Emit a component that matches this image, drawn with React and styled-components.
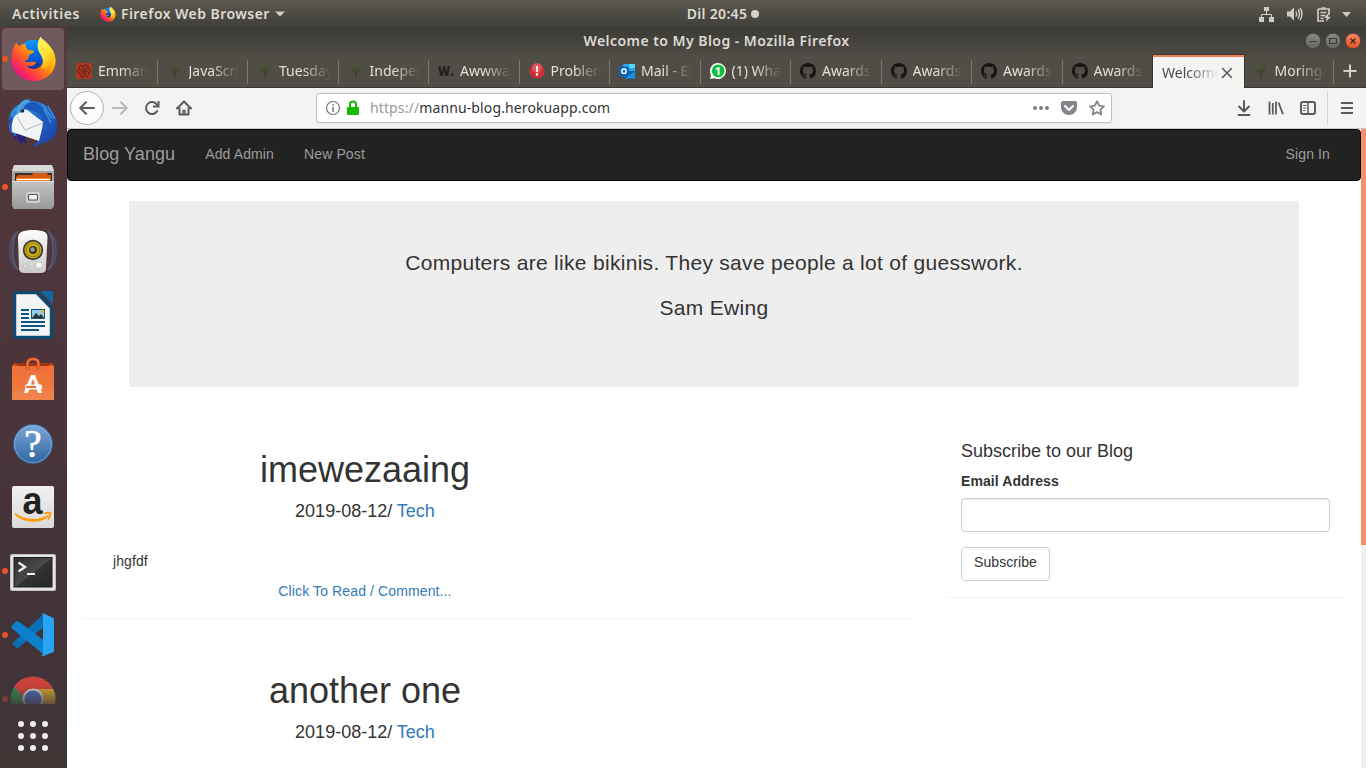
import React from "react";
import styled, { createGlobalStyle } from "styled-components";

const Global = createGlobalStyle`
  * { box-sizing: border-box; }
  html, body { margin: 0; padding: 0; height: 768px; overflow: hidden; }
  body { font-family: "Liberation Sans", Arial, sans-serif; font-size: 14px; line-height: 20px; color: #333; }
  a { text-decoration: none; color: #337ab7; }
  h1, h3, h4, p { margin: 0; font-weight: 400; }
  svg { display: block; flex: none; }
`;

const ui = `font-family: "Noto Sans", "Open Sans", sans-serif;`;

const Desktop = styled.div`
  width: 1366px; height: 768px; display: flex; flex-direction: column; overflow: hidden;
`;
const TopBar = styled.header`
  height: 27px; flex: none; display: grid; grid-template-columns: 1fr auto 1fr; align-items: center;
  padding: 0 14px 0 12px;
  background: linear-gradient(#5b584f, #403f3a);
  color: #dfdbd2; ${ui} font-size: 14px; font-weight: 600;
`;
const BarGroup = styled.div`
  display: flex; align-items: center; height: 27px;
  justify-content: ${(p) => (p.$end ? "flex-end" : "flex-start")};
`;
const BarText = styled.span`
  white-space: nowrap; line-height: 26px; letter-spacing: ${(p) => p.$ls || 0}px;
  margin-left: ${(p) => p.$ml || 0}px; margin-right: ${(p) => p.$mr || 0}px;
`;
const Clock = styled.div`display: flex; align-items: center; transform: translateX(41px); gap: 4px;`;
const Dot = styled.i`width: 8px; height: 8px; border-radius: 50%; background: #d4d1ca;`;

const Body = styled.div`display: flex; flex: 1; min-height: 0;`;
const Dock = styled.nav`
  width: 67px; flex: none; display: flex; flex-direction: column;
  background: linear-gradient(#54383c, #4b353b 45%, #43333a 80%, #3f3535);
`;
const DockList = styled.div`height: 677px; overflow: hidden; flex: none;`;
const DockItem = styled.div`
  height: 64px; width: 66px; position: relative;
  opacity: ${(p) => (p.$dim ? 0.85 : 1)};
  &::before {
    content: ""; position: absolute; display: ${(p) => (p.$active ? "block" : "none")};
    left: 2px; top: 1px; width: 62px; height: 62px; border-radius: 4px; background: #705a5e;
  }
  &::after {
    content: ""; position: absolute; display: ${(p) => (p.$running ? "block" : "none")};
    left: 2px; top: 29px; width: 6px; height: 6px; border-radius: 50%; background: #e95420;
    opacity: ${(p) => (p.$dim ? 0.4 : 1)};
  }
  svg { position: relative; }
`;
const AppsButton = styled.div`height: 64px; width: 66px;`;

const Window = styled.main`flex: 1; min-width: 0; display: flex; flex-direction: column; background: #fff;`;
const TitleBar = styled.div`
  height: 28px; flex: none; display: grid; grid-template-columns: 1fr auto 1fr; align-items: center;
  padding-right: 5px; background: linear-gradient(#3b3a36, #4d4b44);
  color: #dfdbd2; ${ui} font-size: 14px; font-weight: 600;
`;
const WinButtons = styled.div`grid-column: 3; display: flex; justify-content: flex-end; gap: 4px;`;
const WinTitle = styled.div`grid-column: 2; letter-spacing: ${(p) => p.$ls}px; line-height: 26px; padding-left: 5px;`;

const TabStrip = styled.div`
  height: 33px; flex: none; display: flex; background: #504d46; border-bottom: 1px solid #3a3934;
`;
const Tabs = styled.div`width: 1267px; display: flex;`;
const Tab = styled.div`
  flex: 1 1 0; min-width: 0; display: flex; align-items: center; position: relative;
  padding: 0 9px 0 9px; height: 32px; color: #e2dfd8; ${ui} font-size: 14px;
  &::after {
    content: ""; position: absolute; right: 0; top: 5px; width: 1px; height: 24px;
    background: ${(p) => (p.$sep ? "#7b7870" : "transparent")};
  }
`;
const ActiveTab = styled(Tab)`
  height: 33px; background: #f5f4f2; color: #4c4c4c; padding: 0 9px 0 9px;
  border-top: 2px solid #f0805a; box-shadow: -1px 0 #37352f, 1px 0 #37352f, 0 -1px #37352f;
`;
const TabTitle = styled.span`
  margin-left: ${(p) => (p.$first ? 0 : 6)}px; flex: 1; min-width: 0; overflow: hidden; white-space: nowrap;
  line-height: 32px; height: 32px;
  mask-image: linear-gradient(to right, #000 45%, transparent 100%);
`;
const NewTab = styled.div`width: 32px; height: 32px; display: flex; align-items: center; justify-content: center;`;

const Toolbar = styled.div`
  height: 41px; flex: none; display: flex; align-items: center; background: #f4f3f1;
  border-bottom: 1px solid #c9c7c4; padding: 0 3px;
`;
const NavButton = styled.div`
  width: 32px; height: 40px; display: flex; align-items: center; justify-content: center;
`;
const BackButton = styled.div`
  width: 34px; height: 34px; border: 1px solid #b5b3b0; border-radius: 50%; background: #fcfcfb;
  display: flex; align-items: center; justify-content: center;
`;
const UrlBar = styled.div`
  width: 796px; height: 30px; margin-left: 116px; border: 1px solid #c4c2bf; border-radius: 3px;
  background: #fff; display: flex; align-items: center; box-shadow: 0 1px 2px rgba(0,0,0,.06);
  padding: 0 5px 0 8px;
`;
const Identity = styled.div`display: flex; gap: 6px;`;
const Url = styled.span`
  flex: 1; margin-left: 11px; color: #333; ${ui} font-size: 14px; letter-spacing: ${(p) => p.$ls}px;
  line-height: 28px;
  span { color: #999; }
`;
const UrlActions = styled.div`display: flex; gap: 10px;`;
const Tools = styled.div`display: flex; margin-left: auto; align-items: center;`;
const ToolSep = styled.i`width: 1px; height: 34px; background: #d6d4d1; margin: 0 3px 0 3px;`;

const Viewport = styled.div`flex: 1; min-height: 0; display: flex; overflow: hidden;`;
const Page = styled.div`flex: 1; min-width: 0; overflow: hidden; background: #fff;`;
const Scrollbar = styled.div`
  width: 5px; background: #f0f0f0;
  &::before { content: ""; display: block; height: 416px; background: #f4906a; }
`;
const Navbar = styled.div`
  height: 52px; border: 1px solid #080808; border-radius: 4px; background: #222; color: #9d9d9d;
  display: flex; padding: 0 30px 0 15px; line-height: 20px; align-items: flex-start;
`;
const Brand = styled.a`font-size: 18px; color: #9d9d9d; padding: 14px 0; letter-spacing: .08px;`;
const NavLink = styled.a`
  color: #9d9d9d; padding: 14px 0; letter-spacing: .12px;
  margin-left: ${(p) => (p.$right ? "auto" : "30px")};
`;
const Jumbotron = styled.section`
  width: 1170px; margin: 20px auto 30px; padding: 47px 60px; height: 186px; background: #eee;
  display: flex; flex-direction: column; gap: 15px; text-align: center;
  p { font-size: 21px; line-height: 30px; letter-spacing: .3px; }
`;
const Columns = styled.div`display: flex; gap: 30px; padding: 0 15px; align-items: flex-start;`;
const Posts = styled.div`width: 833px; display: flex; flex-direction: column; gap: 20px;`;
const Panel = styled.article`
  border: 1px solid transparent; border-radius: 4px; background: #fff;
  box-shadow: 0 1px 2px rgba(0,0,0,.06);
`;
const Post = styled(Panel)`height: 201px; padding: 32px 30px 0;`;
const PostHead = styled.div`width: 504px; text-align: center; padding-bottom: 30px;`;
const PostTitle = styled.h1`font-size: 36px; line-height: 40px;`;
const PostMeta = styled.h3`font-size: 18px; line-height: 20px; margin-top: 11px;`;
const PostText = styled.p`margin-bottom: 10px; letter-spacing: .1px;`;
const ReadMore = styled.div`width: 504px; text-align: center; letter-spacing: .12px;`;
const Aside = styled(Panel)`width: 401px; height: 180px; padding: 23px 15px 0; display: flex; flex-direction: column;`;
const AsideTitle = styled.h4`font-size: 18px; line-height: 20px; margin-bottom: 10px;`;
const Label = styled.label`font-weight: 700; margin-bottom: 7px; letter-spacing: .08px;`;
const Input = styled.input`
  height: 34px; width: 369px; border: 1px solid #ccc; border-radius: 4px; background: #fff;
  box-shadow: inset 0 1px 1px rgba(0,0,0,.075); margin: 0 0 15px; padding: 6px 12px; outline: none;
`;
const Button = styled.button`
  height: 34px; width: 89px; border: 1px solid #ccc; border-radius: 4px; background: #fff; color: #333;
  font: 14px/20px "Liberation Sans", Arial, sans-serif; padding: 0 0 4px; letter-spacing: .08px;
`;

/* ---------- icons ---------- */
const Firefox = ({ size = 48, id = "f", ...rest }) => (
  <svg width={size} height={size} viewBox="0 0 48 48" {...rest}>
    <defs>
      <linearGradient id={id + "a"} x1="0.85" y1="0.1" x2="0.15" y2="0.85">
        <stop offset="0" stopColor="#fff44f" /><stop offset=".35" stopColor="#ffb000" />
        <stop offset=".6" stopColor="#ff6a20" /><stop offset=".85" stopColor="#ff2b55" /><stop offset="1" stopColor="#e31587" />
      </linearGradient>
      <linearGradient id={id + "b"} x1=".5" y1="0" x2=".6" y2="1">
        <stop offset="0" stopColor="#0a9bff" /><stop offset=".5" stopColor="#0060df" /><stop offset="1" stopColor="#2a1b7a" />
      </linearGradient>
      <linearGradient id={id + "c"} x1=".3" y1="0" x2=".8" y2="1">
        <stop offset="0" stopColor="#fff36a" /><stop offset=".55" stopColor="#ffe030" /><stop offset="1" stopColor="#ff9a00" />
      </linearGradient>
    </defs>
    <circle cx="24" cy="22" r="17" fill={`url(#${id}b)`} />
    <path fill={`url(#${id}a)`} d="M6.500 7.500C7 9.500 8 11 9.500 11.500c2-1.700 4-2.500 6.500-2.500-.5 2.500.5 5 3 6.300l5.500.7c-.2 2-1.500 2.800-4.500 4-1 1-.5 3-1.500 4.500-1.500 1-2.500 1-3.300 2.300 3 2.200 7.800-.8 11.300 1.200-1.500 4-6.500 4-9.500 3.500 3.500 4.500 11 4.500 15-.5 4.500-6 2.500-13.500-2.500-18L31 2.500C35 5 46.500 14 46.500 26 46.500 38.500 36.500 47 24.500 47 11.500 47 1.500 37.500 1.500 25 1.500 17.500 3.500 12 6.500 7.500z" />
    <path fill={`url(#${id}c)`} d="M31.500 1.500C26.500 8 28 15 31.500 20.500c3 4.500 2.500 9.500.5 14C41 35 46 27 45.500 20.500 44.500 12 33.500 10 31.500 1.500z" />
  </svg>
);

const DockSvg = ({ children }) => <svg width="66" height="64" viewBox="0 0 66 64">{children}</svg>;

const FirefoxDock = () => (
  <DockSvg><Firefox x="10" y="8" size={47} id="fd" /></DockSvg>
);
const Thunderbird = () => (
  <DockSvg>
    <defs>
      <linearGradient id="tb" x1="0" y1="0" x2="1" y2="1"><stop offset="0" stopColor="#3fa0e0" /><stop offset=".5" stopColor="#1f68cc" /><stop offset="1" stopColor="#1b3a9c" /></linearGradient>
    </defs>
    <path fill="#2a2273" d="M12 40l3 8 2-1 4 7 2-4 4 3-3-10z" />
    <path fill="url(#tb)" d="M20 13c2-4 5-5 11-5l-3 2c17-1 29 10 29 25 0 7-2 11-5 14l0-3c-2 4-6 6-9 7l1-3c-3 3-6 5-12 6 5-4 9-9 9-14L18 26l-3 14 2 6c-2-1-4-2-5-5l-1 2c-2-5-3-9-1-14l-1 1c0-7 4-14 11-17z" />
    <path fill="#1b50b0" d="M9 30l2-6 3 10-1 6-2 3z" />
    <path fill="#f2f3f4" d="M18 22l8-4 17 13-1 7-3 12-27-9c-1-5 0-12 3-16z" />
    <path d="M17 26l8 13 18-7" fill="none" stroke="#b8b8b8" />
    <path fill="#1c58b8" d="M19 20c2-8 8-11 15-9 7 2 8 8 12 12 3 3 3 6 1 10-3-6-9-13-17-14l-6-1-4 4z" />
    <path fill="#58aee6" d="M20 13c-3 4-4 8-3 12 2-4 4-5 6-6 1-5 4-7 8-8-3-3-8-2-11 2z" opacity=".75" />
    <circle cx="22.500" cy="20" r="1.800" fill="#142a55" />
    <path d="M42 13l10 14M48 15l7 13M44 18l7 14" stroke="#3d91dc" strokeWidth="1.300" />
  </DockSvg>
);
const Files = () => (
  <DockSvg>
    <defs><linearGradient id="fg" x1="0" y1="0" x2="0" y2="1"><stop offset="0" stopColor="#c4c4c4" /><stop offset="1" stopColor="#9a9a9a" /></linearGradient></defs>
    <path fill="#a4a4a4" d="M12 16l2-5h38l2 5v27H12z" />
    <path fill="#d8d8d8" d="M14 10h38l2 6H12z" />
    <rect x="15" y="18" width="37" height="10" fill="#34302e" />
    <path d="M16 22l2-2h14l1-2h14l1 2h3v8H16z" fill="#d45712" /><path d="M16 23h34v5H16z" fill="#f28a35" /><path d="M17 24.500h33" stroke="#fff" strokeWidth="1" />
    <path d="M12 26h42v25l-2 3H14l-2-3z" fill="url(#fg)" /><path d="M12 26.500h42" stroke="#dedede" />
    <rect x="26" y="37" width="14" height="11" rx="2" fill="#d0d0d0" /><rect x="28.500" y="39.500" width="9" height="5.500" rx="1" fill="#f5f5f5" stroke="#555" strokeWidth="1.200" />
  </DockSvg>
);
const Rhythmbox = () => (
  <DockSvg>
    <defs><linearGradient id="rg" x1="0" y1="0" x2="0" y2="1"><stop offset="0" stopColor="#fdfdfd" /><stop offset="1" stopColor="#c9c9c7" /></linearGradient></defs>
    <g fill="none" stroke="#5a78a8" strokeWidth="1.500">
      <path opacity=".6" d="M18 12c-7 8-7 30 0 39M48 12c7 8 7 30 0 39" />
      <path opacity=".4" d="M15 14c-6 9-6 26 0 35M51 14c6 9 6 26 0 35" />
      <path opacity=".22" d="M12 18c-4 8-4 19 0 27M54 18c4 8 4 19 0 27" />
    </g>
    <path fill="url(#rg)" d="M24 12c5-1.500 13-1.500 18 0 4 1 5.500 3 5.500 7L46 49c0 4-2 5-6 5H26c-5 0-7-1-7-5l-1-30c0-4 2-6 6-7z" />
    <circle cx="33" cy="31" r="10.200" fill="#3b3a38" /><circle cx="33" cy="31" r="8.500" fill="#cbae12" />
    <circle cx="33" cy="31" r="6.800" fill="none" stroke="#917c08" /><circle cx="33" cy="31" r="4" fill="#3a382e" /><circle cx="32.500" cy="30.500" r="2.300" fill="#9a9a94" />
    <circle cx="39" cy="46" r="3.300" fill="#f8f8f8" stroke="#c8c8c6" /><circle cx="25.500" cy="47" r="2.200" fill="#dededc" stroke="#c5c5c3" />
  </DockSvg>
);
const Writer = () => (
  <DockSvg>
    <path fill="#0c4a73" d="M15.500 8H37l16 16.500V53c0 2-1 3-3 3H16c-2 0-3-1-3-3V10.500C13 9 14 8 15.500 8z" />
    <path fill="#0e68a3" d="M40 8h11c1.500 0 2 1 2 2v11.500z" />
    <path fill="#f3f4f5" stroke="#c6c8ca" d="M16.500 11.500H36L49.500 25.500v27h-33z" />
    <g fill="#0d5480"><path d="M21 26h8v2h-8zM21 30h8v2h-8zM21 34h8v2h-8zM21 38h24v2H21zM21 42h24v2H21zM21 46h18v2H21z" /></g>
    <rect x="31.500" y="26.500" width="13" height="9" fill="#8ccdf0" stroke="#0d5480" /><path d="M32 35l4-5 3 3 2-2 3 4z" fill="#333" /><circle cx="42.500" cy="28.500" r="1.800" fill="#e2b92e" />
  </DockSvg>
);
const Software = () => (
  <DockSvg>
    <defs><linearGradient id="sg" x1="0" y1="0" x2="0" y2="1"><stop offset="0" stopColor="#f07038" /><stop offset="1" stopColor="#ef7d43" /></linearGradient></defs>
    <path fill="#9e3310" d="M14 16h38l2 4H12z" />
    <path fill="#d5501e" d="M14 16l6 4h-8zM52 16l-6 4h8z" />
    <rect x="12" y="19" width="42" height="34" fill="url(#sg)" /><path d="M12 44h42v9H12z" fill="#fff" opacity=".06" />
    <path d="M27.500 23v-6c0-4 2-5 5.500-5s5.500 1 5.500 5v6" fill="none" stroke="#b7421a" strokeWidth="3.500" />
    <path d="M27.500 23v-6c0-4 2-5 5.500-5s5.500 1 5.500 5v6" fill="none" stroke="#f0743e" strokeWidth="2" />
    <text x="33" y="46" textAnchor="middle" fontFamily="Lato, sans-serif" fontWeight="900" fontSize="25" fill="#fff">A</text>
    <rect x="25" y="37.500" width="17" height="5" rx="1.500" fill="#fff" /><rect x="26" y="39" width="10" height="2" fill="#f07038" />
  </DockSvg>
);
const Help = () => (
  <DockSvg>
    <defs><linearGradient id="hg" x1="0" y1="0" x2="0" y2="1"><stop offset="0" stopColor="#7da8d8" /><stop offset="1" stopColor="#2f649f" /></linearGradient></defs>
    <circle cx="33" cy="33" r="19.500" fill="url(#hg)" stroke="#2e5f96" />
    <circle cx="33" cy="33" r="18.500" fill="none" stroke="#8fb5de" strokeWidth=".8" opacity=".8" />
    <text x="33" y="46" textAnchor="middle" fontFamily="Liberation Serif, serif" fontSize="39" fill="#fff" stroke="#fff" strokeWidth=".7">?</text>
  </DockSvg>
);
const Amazon = () => (
  <DockSvg>
    <defs><linearGradient id="ag" x1="0" y1="0" x2="0" y2="1"><stop offset="0" stopColor="#f1f1f1" /><stop offset="1" stopColor="#dadada" /></linearGradient></defs>
    <rect x="12" y="11" width="42" height="42" rx="2" fill="url(#ag)" />
    <text x="32.500" y="38.500" textAnchor="middle" fontFamily="Liberation Sans, sans-serif" fontWeight="700" fontSize="39" textLength="20" lengthAdjust="spacingAndGlyphs" fill="#222">a</text>
    <path fill="#ff9900" d="M15 38c10 7 23 8 33 2l1 1.500C39 49.500 24 48 15 40z" />
    <path fill="none" stroke="#ff9900" strokeWidth="1.700" d="M44 38.500c3-1.200 5-1.200 6.500-.5 0 2.500-.8 4.500-2.500 6.500" />
  </DockSvg>
);
const TerminalIcon = () => (
  <DockSvg>
    <defs><linearGradient id="tg" x1="0" y1="0" x2="1" y2="1"><stop offset="0" stopColor="#2d2d2d" /><stop offset=".5" stopColor="#4a4a4a" /><stop offset=".52" stopColor="#333" /><stop offset="1" stopColor="#262626" /></linearGradient></defs>
    <rect x="10" y="15" width="46" height="37" rx="2" fill="#c0c0c0" /><rect x="11" y="16" width="44" height="35" rx="1" fill="#e4e4e4" />
    <rect x="14" y="18.500" width="38" height="29.500" fill="url(#tg)" stroke="#1b1b1b" />
    <path d="M18.500 23.500l6.500 4.500-6.500 4.500" fill="none" stroke="#eee" strokeWidth="2.400" /><path d="M27 34h8v2h-8z" fill="#f3f3f3" />
  </DockSvg>
);
const Code = () => (
  <DockSvg>
    <path fill="#0a6fb5" d="M12 40.500l4 4c1 .7 2 .7 2.800 0L43 24.500V11.500z" />
    <path fill="#0c80cc" d="M12 22.500l4-4c1-.7 2-.7 2.800 0L43 37v14L12 25.500c-1-1-1-2 0-3z" />
    <path fill="#27a5f2" d="M43.500 10.500l9.500 4.200c.7.400 1 .9 1 1.600v31.200c0 .8-.3 1.400-1 1.700L43.500 53c-1 .4-2-.3-2.500-1 1.200.7 2-.3 2-1V12.500c0-.8-.8-1.500-2-1 .6-.8 1.500-1.300 2.500-1z" />
  </DockSvg>
);
const Chrome = () => (
  <DockSvg>
    <defs>
      <linearGradient id="cf" x1="0" y1="9" x2="0" y2="37" gradientUnits="userSpaceOnUse"><stop offset=".35" stopColor="#43343a" stopOpacity="0" /><stop offset="1" stopColor="#43343a" stopOpacity=".75" /></linearGradient>
      <clipPath id="cc"><circle cx="33" cy="32" r="22.500" /></clipPath>
    </defs>
    <g clipPath="url(#cc)">
      <rect x="10" y="9" width="46" height="46" fill="#2c9a52" />
      <path d="M33 22h24v33H33z" fill="#e9b631" />
      <path d="M14 20L22 6h36v16H33c-5 0-9 4-10 8z" fill="#e2453c" />
    </g>
    <circle cx="33" cy="32" r="10.500" fill="#eee" /><circle cx="33" cy="32" r="8.500" fill="#4576c8" />
    <rect x="9" y="8" width="48" height="30" fill="url(#cf)" />
  </DockSvg>
);
const AppsGrid = () => (
  <svg width="66" height="64" viewBox="0 0 66 64" fill="#eeeeec">
    {[20, 32, 44].map((y) => [21, 33, 45].map((x) => <circle key={x + "-" + y} cx={x} cy={y} r="3" />))}
  </svg>
);

const Fav = ({ kind }) => {
  if (kind === "wars")
    return (
      <svg width="16" height="16" viewBox="0 0 16 16"><rect width="16" height="16" fill="#b1361e" />
        <g fill="none" stroke="#5a2a20" strokeWidth="1.100">
          {[0, 60, 120, 180, 240, 300].map((a) => <path key={a} transform={`rotate(${a} 8 8)`} d="M8 7.500C6 6 6 3.500 8.500 2.300c1.500-.4 3 0 4 1" />)}
        </g></svg>
    );
  if (kind === "tree")
    return (
      <svg width="16" height="16" viewBox="0 0 16 16">
        <path d="M8 15.500V9M7.700 10L4 6.500M8.300 10L12 5.500M8 9V4" stroke="#3f4426" strokeWidth="1.500" fill="none" />
        <g fill="#48502f"><circle cx="3" cy="5" r="1.300" /><circle cx="6" cy="3.500" r="1.300" /><circle cx="9.500" cy="2.500" r="1.200" /><circle cx="12.500" cy="4" r="1.300" /><circle cx="4" cy="8" r="1" /><circle cx="12.500" cy="7.500" r="1" /><circle cx="8" cy="5.500" r="1.200" /></g>
      </svg>
    );
  if (kind === "w")
    return (
      <svg width="16" height="16" viewBox="0 0 16 16"><text x="0" y="13" textLength="15.500" lengthAdjust="spacingAndGlyphs" fontFamily="Open Sans, sans-serif" fontWeight="800" fontSize="14" fill="#222">W.</text></svg>
    );
  if (kind === "alert")
    return (
      <svg width="16" height="16" viewBox="0 0 16 16"><circle cx="8" cy="8" r="7.600" fill="#cf2d35" /><circle cx="8" cy="5" r="5" fill="#ea8589" opacity=".45" /><path d="M7 3h2l-.3 6H7.300z" fill="#fff" /><circle cx="8" cy="11.500" r="1.200" fill="#fff" /></svg>
    );
  if (kind === "outlook")
    return (
      <svg width="16" height="16" viewBox="0 0 16 16"><path fill="#28a8ea" d="M4 1h12v8H4z" /><path fill="#50d9ff" d="M10 1h6v4h-6z" /><path fill="#0a5ea8" d="M4 8h12v7.500H4z" /><path fill="#1490df" d="M16 8v7.500H6z" />
        <rect y="3.500" width="10" height="9.500" rx=".8" fill="#0f64bd" /><circle cx="5" cy="8.200" r="2.200" fill="none" stroke="#fff" strokeWidth="1.400" /></svg>
    );
  if (kind === "whatsapp")
    return (
      <svg width="16" height="16" viewBox="0 0 16 16"><path fill="#fff" d="M8 0a8 8 0 1 1-3.500 15.200L0 16l1-4A8 8 0 0 1 8 0z" /><circle cx="8.200" cy="7.900" r="6.400" fill="#0ec143" />
        <text x="8" y="12" textAnchor="middle" fontFamily="Open Sans, sans-serif" fontWeight="700" fontSize="11" fill="#fff">1</text></svg>
    );
  return (
    <svg width="16" height="16" viewBox="0 0 16 16" fill="#161514"><path d="M8 0C3.580 0 0 3.580 0 8c0 3.540 2.290 6.530 5.470 7.590.4.070.55-.17.55-.38 0-.19-.01-.82-.01-1.490-2.010.37-2.530-.49-2.690-.94-.09-.23-.48-.94-.82-1.130-.28-.15-.68-.52-.01-.53.63-.01 1.080.58 1.230.82.72 1.210 1.870.87 2.330.66.07-.52.28-.87.51-1.070-1.780-.2-3.640-.89-3.640-3.950 0-.87.31-1.590.82-2.150-.08-.2-.36-1.020.08-2.120 0 0 .67-.21 2.200.82.64-.18 1.320-.27 2-.27s1.360.09 2 .27c1.530-1.040 2.200-.82 2.200-.82.44 1.100.16 1.920.08 2.120.51.56.82 1.270.82 2.150 0 3.070-1.870 3.750-3.650 3.950.29.25.54.73.54 1.480 0 1.070-.01 1.930-.01 2.200 0 .21.15.46.55.38A8.010 8.010 0 0 0 16 8c0-4.420-3.580-8-8-8z" /></svg>
  );
};

const Ico = ({ children, c = "#5c5b59", s = 16 }) => (
  <svg width={s} height={s} viewBox="0 0 16 16" fill="none" stroke={c} strokeWidth="2" strokeLinecap="round" strokeLinejoin="round">{children}</svg>
);
const Round = ({ close, children }) => (
  <svg width="16" height="16" viewBox="0 0 16 16" fill="none">
    <defs><linearGradient id={close ? "wr" : "wg"} x1="0" y1="0" x2="0" y2="1"><stop offset="0" stopColor={close ? "#f58a66" : "#8b8983"} /><stop offset="1" stopColor={close ? "#e2501f" : "#67655f"} /></linearGradient></defs>
    <circle cx="8" cy="8" r="7.700" fill={`url(#${close ? "wr" : "wg"})`} stroke="#35342f" strokeWidth=".6" />
    {children}
  </svg>
);

const tabs = [
  ["wars", "Emmanuel"], ["tree", "JavaScript"], ["tree", "Tuesday"], ["tree", "Independent"],
  ["w", "Awwwards"], ["alert", "Problem"], ["outlook", "Mail - Em"], ["whatsapp", "(1) What"],
  ["github", "Awards"], ["github", "Awards"], ["github", "Awards"], ["github", "Awards"],
];

const dock = [
  [FirefoxDock, true, true], [Thunderbird], [Files, true], [Rhythmbox], [Writer], [Software], [Help],
  [Amazon], [TerminalIcon, true], [Code, true], [Chrome, true, false, true],
];

const posts = [
  { title: "imewezaaing", text: "jhgfdf" },
  { title: "another one", text: "" },
];

export default function App() {
  return (
    <Desktop>
      <Global />
      <TopBar>
        <BarGroup>
          <BarText $ls={0.55} $mr={20}>Activities</BarText>
          <Firefox size={16} id="ft" />
          <BarText $ls={0.45} $ml={5} $mr={5}>Firefox Web Browser</BarText>
          <svg width="10" height="6" viewBox="0 0 10 6"><path d="M0 .5h10L5 5.500z" fill="#cfccc5" /></svg>
        </BarGroup>
        <Clock><BarText $ls={0.3}>Dil 20:45</BarText><Dot /></Clock>
        <BarGroup $end>
          <svg width="94" height="18" viewBox="0 0 94 18" fill="#cfccc5">
            <path d="M6 2h5v4H6zM1 12h5v5H1zM11 12h5v5h-5z" />
            <path d="M8.500 6v3.500M3.500 12V9.500h10V12" fill="none" stroke="#cfccc5" />
            <path d="M29 6.500h3l4-4v13l-4-4h-3z" />
            <path d="M38 6.500q1.500 2.500 0 5M40 4.500q3 4.500 0 9M42 3q4 6 0 12" fill="none" stroke="#cfccc5" strokeWidth="1.400" />
            <path d="M60 4h11v6M60 4v12h6M63.500 3h4M62.500 7.500h6M62.500 10.500h5M62.500 13.500h3" fill="none" stroke="#cfccc5" strokeWidth="1.700" />
            <path d="M71 7.500L66 13h3l-1.500 4L73 11.800h-3z" />
            <path d="M84 7h9l-4.500 5z" />
          </svg>
        </BarGroup>
      </TopBar>
      <Body>
        <Dock>
          <DockList>
            {dock.map(([Icon, running, active, dim], i) => (
              <DockItem key={i} $running={running} $active={active} $dim={dim}><Icon /></DockItem>
            ))}
          </DockList>
          <AppsButton><AppsGrid /></AppsButton>
        </Dock>
        <Window>
          <TitleBar>
            <WinTitle $ls={0.46}>Welcome to My Blog - Mozilla Firefox</WinTitle>
            <WinButtons>
              <Round><path d="M4.500 8.500h7" stroke="#3b3a36" /></Round>
              <Round><rect x="4.500" y="5.500" width="7" height="5" stroke="#3b3a36" /></Round>
              <Round close><path d="M5.500 5.500l5 5M10.500 5.500l-5 5" stroke="#4a1e0e" strokeWidth="1.200" /></Round>
            </WinButtons>
          </TitleBar>
          <TabStrip>
            <Tabs>
              {tabs.map(([icon, title], i) => (
                <Tab key={i} $sep={i < 11}><Fav kind={icon} /><TabTitle>{title}</TabTitle></Tab>
              ))}
              <ActiveTab>
                <TabTitle $first>Welcome to</TabTitle>
                <Ico s={16} c="#5c5b59"><path d="M3.500 3.500l9 9M12.500 3.500l-9 9" strokeWidth="1.600" /></Ico>
              </ActiveTab>
              <Tab $sep><Fav kind="tree" /><TabTitle>Moringa</TabTitle></Tab>
            </Tabs>
            <NewTab><Ico c="#d4d1ca"><path d="M8 1.500v13M1.500 8h13" strokeLinecap="butt" /></Ico></NewTab>
          </TabStrip>
          <Toolbar>
            <BackButton><Ico><path d="M1.500 8H15M7 2.200L1.200 8 7 13.800" /></Ico></BackButton>
            <NavButton><Ico c="#bab9b7"><path d="M14.500 8H1M9 2.200L14.800 8 9 13.800" /></Ico></NavButton>
            <NavButton><Ico><path d="M13.200 11A6 6 0 1 1 13 4.800" /><path d="M14.500 1v5.500H9" strokeLinejoin="miter" strokeLinecap="butt" /></Ico></NavButton>
            <NavButton><Ico><path d="M1 8.500l7-7 7 7M3.500 8v6.500h9V8" /><path d="M7 14v-3.500h2V14" strokeWidth="1.500" /></Ico></NavButton>
            <UrlBar>
              <Identity>
                <Ico c="#77767a"><circle cx="8" cy="8" r="6.500" strokeWidth="1.200" /><path d="M8 7.500v4M8 4.600v.3" strokeWidth="1.600" /></Ico>
                <svg width="12" height="16" viewBox="0 0 12 16"><path d="M3 8V4.500a3 3 0 0 1 6 0V8" fill="none" stroke="#12bc00" strokeWidth="2" /><rect x="0" y="7" width="12" height="8" rx="1" fill="#12bc00" /></svg>
              </Identity>
              <Url $ls={0.12}><span>https://</span>mannu-blog.herokuapp.com</Url>
              <UrlActions>
                <svg width="18" height="16" viewBox="0 0 18 16" fill="#77767a"><circle cx="3" cy="8" r="1.900" /><circle cx="9" cy="8" r="1.900" /><circle cx="15" cy="8" r="1.900" /></svg>
                <svg width="18" height="16" viewBox="0 0 18 16"><path d="M3 1h12c1.300 0 2 .7 2 2v4c0 4.500-3.500 8-8 8S1 11.500 1 7V3c0-1.300.7-2 2-2z" fill="#85848a" /><path d="M5 6l4 4 4-4" fill="none" stroke="#fff" strokeWidth="2" strokeLinecap="round" /></svg>
                <svg width="18" height="16" viewBox="0 0 18 16"><path d="M9 1.200l2.100 4.500 4.900.6-3.600 3.300.9 4.900L9 12.100l-4.300 2.400.9-4.900L2 6.300l4.900-.6z" fill="none" stroke="#85848a" strokeWidth="1.800" strokeLinejoin="round" /></svg>
              </UrlActions>
            </UrlBar>
            <Tools>
              <NavButton><Ico><path d="M8 1v10M3 6.500L8 11.500 13 6.500M2.500 15h11" /></Ico></NavButton>
              <NavButton><Ico><path d="M1.500 1.500v13M4.800 3v11.500M8 1.500v13M10.500 2.500L15 14.300" strokeWidth="1.800" strokeLinecap="butt" /></Ico></NavButton>
              <NavButton><Ico><rect x="1" y="2" width="14" height="12" rx="2" /><path d="M8 3v10" strokeWidth="1.500" /><path d="M3.500 5.500h2.500M3.500 8h2.500M3.500 10.500h1.500" strokeWidth="1" /></Ico></NavButton>
              <ToolSep />
              <NavButton><Ico><path d="M2 3h12M2 8h12M2 13h12" strokeLinecap="butt" /></Ico></NavButton>
            </Tools>
          </Toolbar>
          <Viewport>
            <Page>
              <Navbar>
                <Brand>Blog Yangu</Brand>
                <NavLink>Add Admin</NavLink>
                <NavLink>New Post</NavLink>
                <NavLink $right>Sign In</NavLink>
              </Navbar>
              <Jumbotron>
                <p>Computers are like bikinis. They save people a lot of guesswork.</p>
                <p>Sam Ewing</p>
              </Jumbotron>
              <Columns>
                <Posts>
                  {posts.map((p) => (
                    <Post key={p.title}>
                      <PostHead>
                        <PostTitle>{p.title}</PostTitle>
                        <PostMeta>2019-08-12/ <a>Tech</a></PostMeta>
                      </PostHead>
                      <PostText>{p.text}</PostText>
                      <ReadMore><a>Click To Read / Comment...</a></ReadMore>
                    </Post>
                  ))}
                </Posts>
                <Aside>
                  <AsideTitle>Subscribe to our Blog</AsideTitle>
                  <Label>Email Address</Label>
                  <Input />
                  <Button>Subscribe</Button>
                </Aside>
              </Columns>
            </Page>
            <Scrollbar />
          </Viewport>
        </Window>
      </Body>
    </Desktop>
  );
}
